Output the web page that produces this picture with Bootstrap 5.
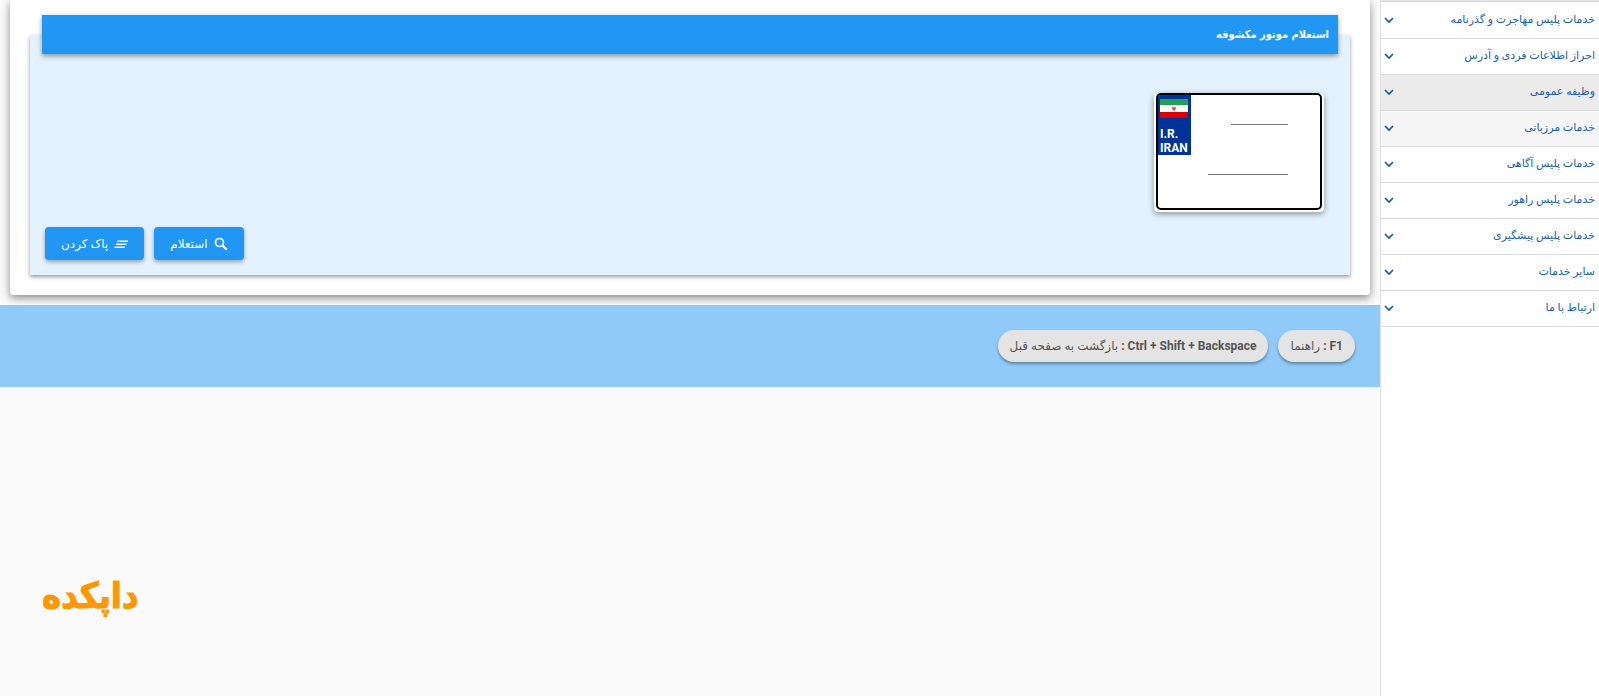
<!DOCTYPE html>
<html lang="fa" dir="rtl">
<head>
<meta charset="utf-8">
<meta name="viewport" content="width=device-width, initial-scale=1">
<title>استعلام موتور مکشوفه</title>
<link href="https://cdn.jsdelivr.net/npm/bootstrap@5.3.0/dist/css/bootstrap.min.css" rel="stylesheet">
<style>
  body { background: #fafafa; font-family: Roboto, "DejaVu Sans", sans-serif; font-size: 12px; }
  .side-menu { width: 219px; border-left: 1px solid #e0e0e0; border-top: 1px solid #e4e4e4; }
  .side-item { height: 36px; padding: 0 4px 0 3px; color: #1a5fb4; font-size: 11px; border-top: 1px solid #dcdcdc; }
  .side-list { border-top: 1px solid #dcdcdc; border-bottom: 1px solid #dcdcdc; }
  .side-item:first-child { border-top: 0; }
  .side-item.active-item { background: #ebebeb; }
  .side-item.hover-item { background: #f5f5f5; }
  .side-item svg { width: 10px; height: 7px; }
  .sheet { background: #fff; margin: 0 10px 10px; padding: 35px 20px 20px; border-radius: 0 0 4px 4px; box-shadow: 0 3px 8px rgba(0,0,0,.45); }
  .panel { display: flow-root; background: #e3f2fd; padding: 0 12px 15px; box-shadow: 0 2px 4px rgba(0,0,0,.4); }
  .panel-title { height: 39px; margin-top: -20px; padding: 0 9px; background: #2196f3; color: #fff; font-family: "DejaVu Sans Condensed", "DejaVu Sans", sans-serif; font-size: 11px; box-shadow: 0 2px 5px rgba(0,0,0,.4); }
  .panel-body { padding: 39px 14px 0 3px; }
  .plate { width: 170px; height: 119px; padding: 0 2px; background: #fff; border-radius: 4px; box-shadow: 0 2px 6px rgba(0,0,0,.4); }
  .plate-frame { height: 117px; border: 2px solid #000; border-radius: 5px; }
  .plate-fields { padding: 11px 32px 0 0; gap: 31px; }
  .plate-fields input { height: 19px; padding: 0; border: 0; border-bottom: 1px solid #777; border-radius: 0; background: transparent; outline: 0; direction: ltr; }
  .serial-top { width: 57px; }
  .serial-bottom { width: 80px; }
  .plate-flag { width: 33px; height: 60px; padding: 4px 2px 0; background: #039; color: #fff; font: bold 12px/14px Roboto, "Liberation Sans", sans-serif; }
  .plate-flag svg { width: 28px; height: 19px; margin-bottom: 9px; }
  .actions { gap: 10px; padding-top: 15px; }
  .btn-act { height: 33px; padding: 0 16px; gap: 6px; border: 0; border-radius: 4px; background: #2196f3; color: #fff; font-size: 12px; box-shadow: 0 2px 4px rgba(0,0,0,.35); }
  .btn-act svg { width: 14px; height: 14px; }
  .hints { background: #90caf9; padding: 25px; gap: 10px; }
  .hint { height: 32px; padding: 0 12px; border-radius: 16px; background: #e4e4e4; color: #555; box-shadow: 0 2px 3px rgba(0,0,0,.35); white-space: pre; }
  .brand-mark { padding: 181px 42px 20px; color: #ff9800; font: bold 36px/56px "DejaVu Sans Condensed", "DejaVu Sans", sans-serif; -webkit-text-stroke: 1px #ff9800; }
</style>
</head>
<body>
<div class="d-flex min-vh-100">
  <nav class="side-menu bg-white flex-shrink-0" aria-label="خدمات">
    <div class="side-list" id="menu"></div>
  </nav>
  <main class="flex-grow-1">
    <section class="sheet">
      <div class="panel">
        <h1 class="panel-title d-flex align-items-center fw-bold mb-0">استعلام موتور مکشوفه</h1>
        <div class="panel-body">
          <div class="plate">
            <div class="plate-frame d-flex justify-content-between">
              <div class="plate-fields d-flex flex-column">
                <input class="serial-top" type="text" aria-label="سه رقم بالای پلاک">
                <input class="serial-bottom" type="text" aria-label="پنج رقم پایین پلاک">
              </div>
              <div class="plate-flag" dir="ltr">
                <svg class="d-block" viewBox="0 0 28 19" aria-hidden="true"><path fill="#fff" d="M0 0h28v19H0z"/><path fill="#239f56" d="M0 0h28v6H0z"/><path fill="#da0000" d="M0 13h28v6H0z"/><path fill="none" stroke="#da3040" stroke-width=".9" d="M13 8q-2 1.8 1 3.4q3-1.6 1-3.4M14 7.6v3.8M12.7 9.6h2.6"/></svg>
                I.R.<br>IRAN
              </div>
            </div>
          </div>
          <div class="actions d-flex justify-content-end">
            <button type="button" class="btn btn-act d-flex align-items-center"><svg viewBox="0 0 14 14" fill="none" stroke="#fff" aria-hidden="true"><circle cx="5.5" cy="5.5" r="4" stroke-width="1.7"/><path stroke-width="2" d="M8.5 8.5l4.3 4.3"/></svg>استعلام</button>
            <button type="button" class="btn btn-act d-flex align-items-center"><svg viewBox="0 0 14 14" stroke="#fff" stroke-width="1.4" aria-hidden="true"><path d="M3.5 4.2H14M2 7.2h10.5M.5 10.2H11"/></svg>پاک کردن</button>
          </div>
        </div>
      </div>
    </section>
    <div class="hints d-flex">
      <span class="hint d-flex align-items-center"><b>F1 : </b>راهنما</span>
      <span class="hint d-flex align-items-center"><b><bdi>Ctrl + Shift + Backspace</bdi> : </b>بازگشت به صفحه قبل</span>
    </div>
    <div class="brand-mark d-flex justify-content-end">داپکده</div>
  </main>
</div>
<script src="https://cdn.jsdelivr.net/npm/bootstrap@5.3.0/dist/js/bootstrap.bundle.min.js"></script>
<script>
  const items = [
    ['خدمات پلیس مهاجرت و گذرنامه', ''],
    ['احراز اطلاعات فردی و آدرس', ''],
    ['وظیفه عمومی', 'active-item'],
    ['خدمات مرزبانی', 'hover-item'],
    ['خدمات پلیس آگاهی', ''],
    ['خدمات پلیس راهور', ''],
    ['خدمات پلیس پیشگیری', ''],
    ['سایر خدمات', ''],
    ['ارتباط با ما', '']
  ];
  document.getElementById('menu').innerHTML = items.map(([label, state]) =>
    `<a href="#" class="side-item ${state} d-flex align-items-center justify-content-between text-decoration-none"><span>${label}</span><svg viewBox="0 0 10 7" fill="none" stroke="#1257a8" stroke-width="1.6" aria-hidden="true"><path d="M1 1l4 4 4-4"/></svg></a>`).join('');
</script>
</body>
</html>
